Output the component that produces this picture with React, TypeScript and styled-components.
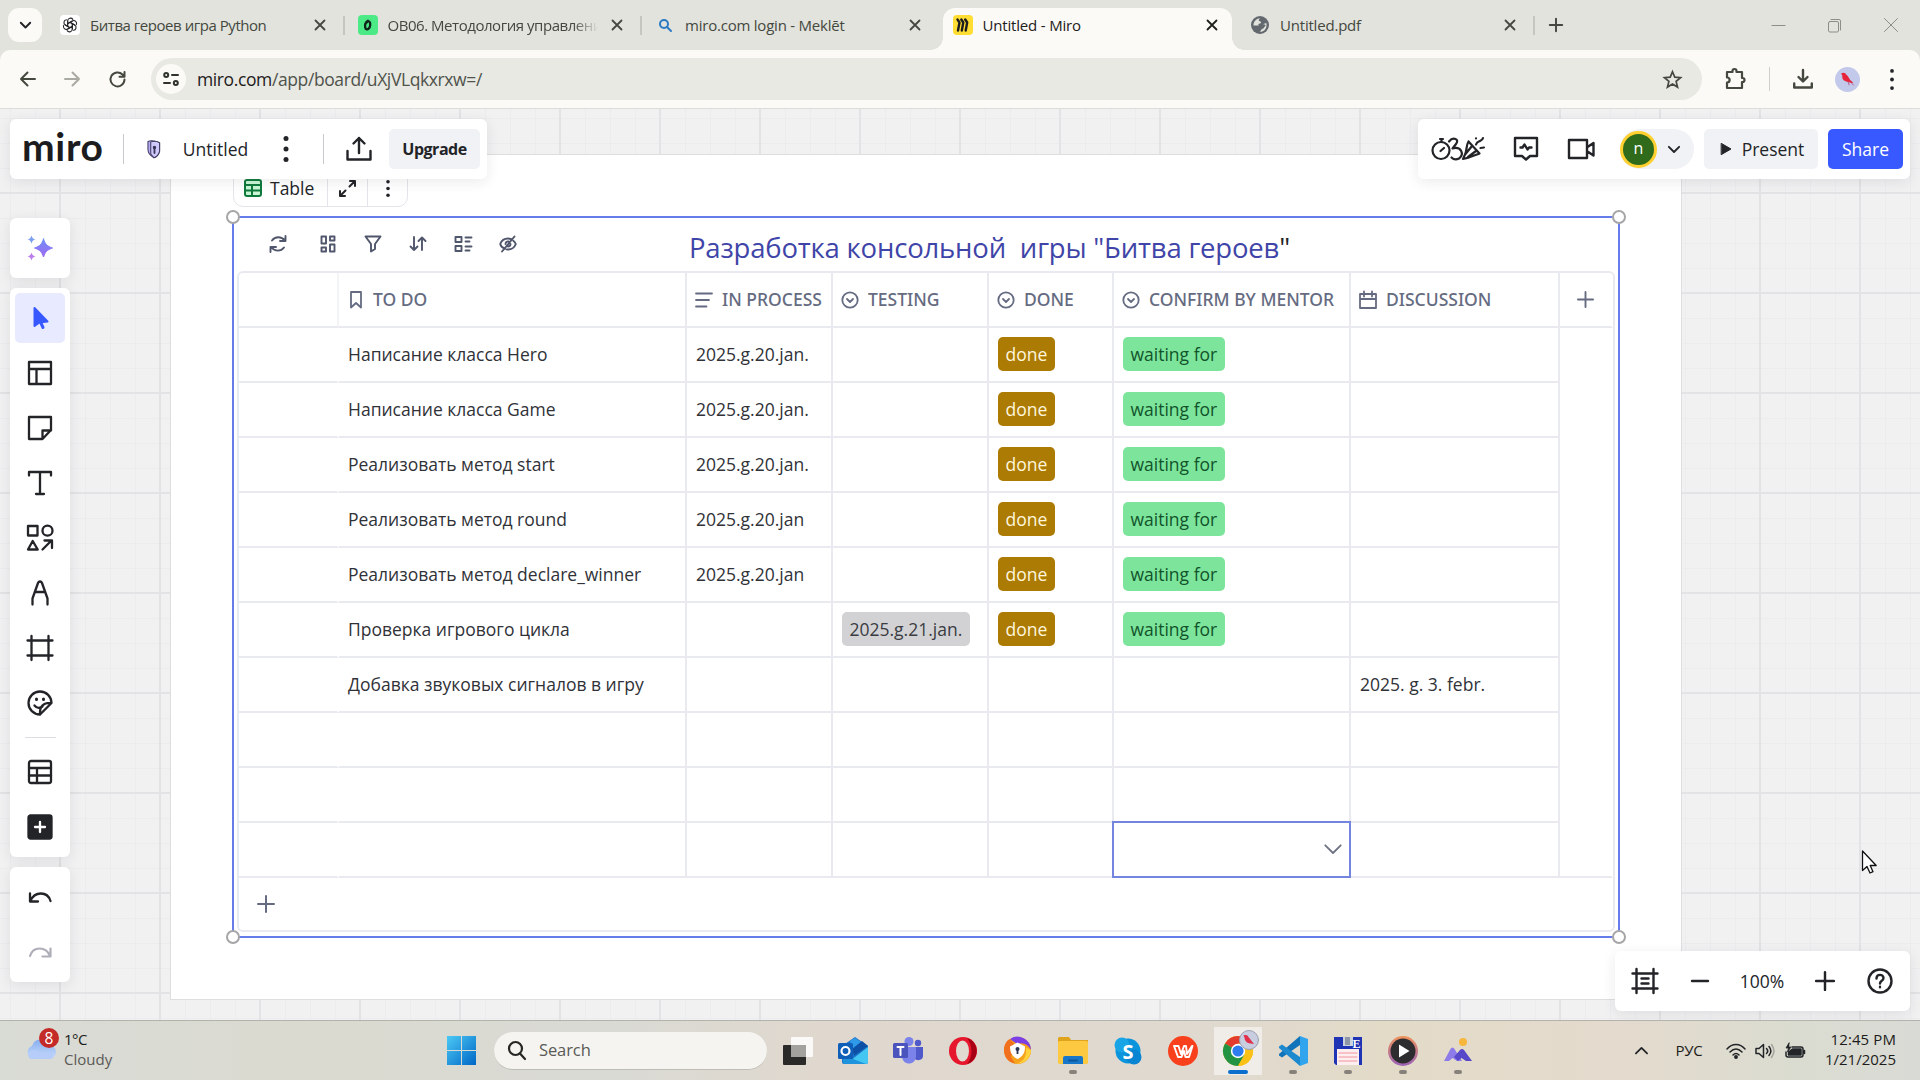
import React from "react";
import styled, { createGlobalStyle, css } from "styled-components";

const INK = "#222428";
const GREY = "#656b81";
const LINE = "#e9eaef";
const BLUE = "#3859ff";
const UI = `"Open Sans", "Noto Sans", sans-serif`;

const GlobalStyle = createGlobalStyle`
  * { box-sizing: border-box; }
  body { margin: 0; overflow: hidden; font-family: ${UI}; color: ${INK}; }
`;

const Screen = styled.div`
  width: 1920px;
  height: 1080px;
  display: flex;
  flex-direction: column;
  overflow: hidden;
`;

const Text = styled.span<{ $size: number; $ls?: number; $color?: string; $weight?: number }>`
  font-size: ${(p) => p.$size}px;
  letter-spacing: ${(p) => p.$ls ?? 0}px;
  color: ${(p) => p.$color ?? INK};
  font-weight: ${(p) => p.$weight ?? 400};
  line-height: 1.3;
  white-space: pre;
`;

const Icon = styled.svg.attrs<{ $w?: number; $stroke?: number; $color?: string }>((p) => ({
  fill: "none",
  stroke: p.$color ?? INK,
  strokeWidth: p.$stroke ?? 2,
  strokeLinecap: "round",
  strokeLinejoin: "round",
}))<{ $w?: number; $stroke?: number; $color?: string }>`
  width: ${(p) => p.$w ?? 24}px;
  height: auto;
  flex: none;
  display: block;
  overflow: visible;
`;

/* ---------- browser tab strip ---------- */

const TabStrip = styled.div`
  height: 50px;
  flex: none;
  background: #e1e3dc;
  display: flex;
  align-items: center;
  padding-left: 8px;
`;

const TabSearch = styled.div`
  width: 34px;
  height: 34px;
  border-radius: 11px;
  background: #fbfaf6;
  display: grid;
  place-items: center;
  margin-right: 4px;
`;

const Tab = styled.div<{ $active?: boolean; $line?: boolean }>`
  width: 297.5px;
  height: 50px;
  display: flex;
  align-items: center;
  padding: 0 18px 8px 14px;
  padding-top: 0;
  position: relative;
  ${(p) =>
    p.$line &&
    css`
      &::after {
        content: "";
        position: absolute;
        right: -1px;
        top: 16px;
        width: 2px;
        height: 19px;
        background: #c4c6bf;
      }
    `}
  ${(p) =>
    p.$active &&
    css`
      &::before {
        content: "";
        position: absolute;
        left: 4px;
        right: 4px;
        top: 8px;
        bottom: 0;
        border-radius: 12px 12px 0 0;
        background: #fbfaf6;
      }
    `}
`;

const Flare = styled.i<{ $side: "left" | "right" }>`
  position: absolute;
  bottom: 0;
  ${(p) => (p.$side === "left" ? "left: -8px;" : "right: -8px;")}
  width: 12px;
  height: 12px;
  background: radial-gradient(circle at ${(p) => (p.$side === "left" ? "0 0" : "100% 0")}, transparent 11.5px, #fbfaf6 12px);
`;

const TabBody = styled.div`
  position: relative;
  flex: 1;
  min-width: 0;
  display: flex;
  align-items: center;
  padding-top: 8px;
`;

const Favicon = styled.div<{ $bg?: string }>`
  width: 20px;
  height: 20px;
  flex: none;
  margin-right: 10px;
  border-radius: 4px;
  background: ${(p) => p.$bg ?? "transparent"};
  display: grid;
  place-items: center;
`;

const TabTitle = styled.div<{ $fade?: boolean }>`
  flex: none;
  width: 210px;
  padding-top: 1px;
  display: flex;
  ${(p) => p.$fade && "mask-image: linear-gradient(90deg, #000 185px, transparent 210px);"}
`;

const Close = ({ color = "#45483f" }: { color?: string }) => (
  <Icon $w={12} viewBox="0 0 12 12" $stroke={1.8} $color={color}>
    <path d="M1.5 1.5l9 9M10.5 1.5l-9 9" />
  </Icon>
);

const CloseSlot = styled.div`
  margin-left: auto;
`;

const WindowButtons = styled.div`
  margin-left: auto;
  display: flex;
  align-items: center;
  gap: 43px;
  padding-right: 22px;
`;

const NewTab = styled.div`
  margin-left: 15px;
`;

/* ---------- address bar ---------- */

const Toolbar = styled.div`
  height: 59px;
  flex: none;
  background: #e1e3dc;
`;

const ToolbarInner = styled.div`
  height: 59px;
  background: #fbfaf6;
  border-radius: 10px 10px 0 0;
  border-bottom: 1px solid #dcddd8;
  display: flex;
  align-items: center;
  padding-left: 19px;
  padding-right: 17px;
`;

const NavButtons = styled.div`
  display: flex;
  align-items: center;
  gap: 28px;
  width: 132px;
`;

const Omnibox = styled.div`
  width: 1551px;
  height: 42px;
  border-radius: 21px;
  background: #e8e9e3;
  display: flex;
  align-items: center;
  padding: 0 20px 0 5px;
`;

const SiteInfo = styled.div`
  width: 30px;
  height: 30px;
  border-radius: 50%;
  background: #fbfaf6;
  display: grid;
  place-items: center;
  margin-right: 11px;
`;

const OmniEnd = styled.div`
  margin-left: auto;
`;

const ToolbarActions = styled.div`
  flex: 1;
  display: flex;
  align-items: center;
  padding-left: 22px;
`;

const ThinRule = styled.div<{ $h: number; $ml: number; $mr: number; $c?: string }>`
  width: 1px;
  height: ${(p) => p.$h}px;
  margin: 0 ${(p) => p.$mr}px 0 ${(p) => p.$ml}px;
  background: ${(p) => p.$c ?? "#c7c9cf"};
  flex: none;
`;

const ProfilePic = styled.div`
  width: 25px;
  height: 25px;
  border-radius: 50%;
  background: #c3c9ea;
  display: grid;
  place-items: center;
  margin: 0 29px 0 22px;
`;

const Bird = ({ w }: { w: number }) => (
  <Icon $w={w} viewBox="0 0 14 14" $stroke={0}>
    <path d="M1 1.500C3 0 5 .5 6 2.500c2 1.500 2.500 3.500 3.500 5L12.500 10l-1.500.2-4.500-1.200C3 8.500 1.800 6 2.200 3.500z" fill="#e8243c" stroke="none" />
    <path d="M7.500 9l1 3M10.500 10l2 2.200" stroke="#b0507a" strokeWidth="0.800" />
  </Icon>
);

/* ---------- board canvas ---------- */

const Canvas = styled.div`
  position: relative;
  height: 911px;
  flex: none;
  overflow: hidden;
  background-color: #f1f1f2;
  background-image: linear-gradient(90deg, #e3e3e5 2px, transparent 2px), linear-gradient(#e3e3e5 2px, transparent 2px),
    linear-gradient(90deg, #ececee 1px, transparent 1px), linear-gradient(#ececee 1px, transparent 1px);
  background-size: 100px 100px, 100px 100px, 25px 25px, 25px 25px;
  background-position: 59px 0, 0 83px, 10px 0, 0 9px;
`;

const Frame = styled.div`
  position: absolute;
  left: 171px;
  top: 46px;
  width: 1510px;
  height: 844px;
  background: #fff;
  outline: 1px solid #dededf;
`;

const Widget = styled.div`
  position: absolute;
  left: 61px;
  top: 61px;
  width: 1388px;
  height: 722px;
  border: 2px solid #667ceb;
  padding: 0 4px 0 3px;
  display: flex;
  flex-direction: column;
`;

const Handle = styled.i<{ $x: "left" | "right"; $y: "top" | "bottom" }>`
  position: absolute;
  ${(p) => p.$x}: -8px;
  ${(p) => p.$y}: -8px;
  width: 14px;
  height: 14px;
  border: 2px solid #a6a6a8;
  border-radius: 50%;
  background: #fff;
`;

const Chip = styled.div`
  position: absolute;
  left: 62px;
  top: 14px;
  width: 175px;
  height: 38px;
  border: 1.500px solid #e4e5ea;
  border-radius: 10px;
  background: #fff;
  display: grid;
  grid-template-columns: 93px 40px 1fr;
`;

const ChipCell = styled.div<{ $first?: boolean }>`
  display: flex;
  align-items: center;
  justify-content: ${(p) => (p.$first ? "flex-start" : "center")};
  gap: 8px;
  padding-left: ${(p) => (p.$first ? 10 : 0)}px;
  border-left: ${(p) => (p.$first ? "none" : "1px solid #e4e5ea")};
`;

const WidgetHead = styled.div`
  height: 53px;
  flex: none;
  display: flex;
  align-items: center;
`;

const HeadTools = styled.div`
  display: flex;
  width: 452px;
  padding-left: 13px;
  padding-bottom: 1px;
  > * {
    width: 45px;
    flex: none;
    display: grid;
    place-items: center;
  }
  > :first-child {
    width: 55px;
  }
`;

const Title = styled.div`
  padding-top: 6px;
  display: flex;
`;

const COLS = "100px 348px 146px 156px 125px 237px 209px 53px";

const Table = styled.div`
  border: 2px solid ${LINE};
  border-radius: 6px;
  width: 1378px;
  height: 661px;
  display: flex;
  flex-direction: column;
`;

const TableBody = styled.div`
  display: grid;
  grid-template-columns: ${COLS};
  grid-template-rows: repeat(11, 55px);
  flex: none;
`;

const Cell = styled.div<{ $noRight?: boolean; $noBottom?: boolean; $center?: boolean; $active?: boolean; $faint?: boolean }>`
  border-right: 2px solid ${(p) => (p.$noRight ? "transparent" : p.$faint ? "#f3f4f6" : LINE)};
  border-bottom: 2px solid ${(p) => (p.$noBottom ? "transparent" : LINE)};
  padding-left: ${(p) => (p.$center ? 0 : 9)}px;
  display: flex;
  align-items: center;
  justify-content: ${(p) => (p.$center ? "center" : "flex-start")};
  min-width: 0;
  ${(p) =>
    p.$active &&
    css`
      margin: -2px 0 0 -2px;
      border: 2px solid #7385de;
      justify-content: flex-end;
      padding-right: 7px;
    `}
`;

const HeaderCell = styled(Cell)<{ $first: boolean }>`
  gap: 9px;
  padding-left: ${(p) => (p.$first ? 9 : 8)}px;
  font-family: "Noto Sans", "Open Sans", sans-serif;
`;

const TAGS = {
  done: ["#ac7b03", "#fff6dd"],
  wait: ["#7ce59b", "#12532b"],
  date: ["#d2d2d4", "#3a3c42"],
};

const Tag = styled.div<{ $kind: keyof typeof TAGS }>`
  height: 34px;
  padding: 0 7.5px;
  margin-bottom: 1px;
  border-radius: 5px;
  background: ${(p) => TAGS[p.$kind][0]};
  color: ${(p) => TAGS[p.$kind][1]};
  font-size: 17.500px;
  display: flex;
  align-items: center;
  white-space: nowrap;
`;

const AddRow = styled.div`
  flex: 1;
  display: flex;
  align-items: center;
  padding-left: 18px;
`;

/* ---------- floating board panels ---------- */

const Panel = styled.div`
  position: absolute;
  background: #fff;
  border-radius: 6px;
  box-shadow: 0 3px 14px rgba(34, 36, 40, 0.09);
  display: flex;
  align-items: center;
`;

const TopLeft = styled(Panel)`
  left: 10px;
  top: 10px;
  width: 477px;
  height: 60px;
  padding-left: 11px;
`;

const TopRight = styled(Panel)`
  left: 1418px;
  top: 10px;
  width: 492px;
  height: 60px;
  padding-left: 13px;
`;

const ZoomPanel = styled(Panel)`
  left: 1615px;
  top: 842px;
  width: 295px;
  height: 60px;
  padding-left: 16px;
`;

const SidePanel = styled(Panel)<{ $top: number; $h: number; $pt?: number }>`
  left: 10px;
  top: ${(p) => p.$top}px;
  width: 60px;
  height: ${(p) => p.$h}px;
  flex-direction: column;
  padding-top: ${(p) => p.$pt ?? 5}px;
  gap: 5px;
`;

const Tool = styled.div<{ $on?: boolean }>`
  width: 50px;
  height: 50px;
  border-radius: 5px;
  background: ${(p) => (p.$on ? "#e8ebff" : "transparent")};
  display: grid;
  place-items: center;
  flex: none;
`;

const ToolRule = styled.div`
  width: 31px;
  height: 1px;
  background: #dcdde2;
  margin: 4px 0 4px;
  flex: none;
`;

const Slot = styled.div<{ $w: number }>`
  width: ${(p) => p.$w}px;
  flex: none;
  display: flex;
  align-items: center;
  justify-content: center;
`;

const LogoText = styled.div`
  width: 86px;
  height: 60px;
  flex: none;
`;

const Button = styled.div<{ $w: number; $blue?: boolean }>`
  width: ${(p) => p.$w}px;
  height: 40px;
  border-radius: 5px;
  background: ${(p) => (p.$blue ? BLUE : "#f1f2f5")};
  display: flex;
  align-items: center;
  justify-content: center;
  gap: 10px;
  flex: none;
`;

const UserPill = styled.div`
  width: 74px;
  height: 40px;
  border-radius: 20px;
  background: #f1f2f5;
  display: flex;
  align-items: center;
  gap: 11px;
  margin: 0 10px 0 25px;
`;

const Avatar = styled.div`
  width: 37px;
  height: 37px;
  border-radius: 50%;
  border: 3px solid #ffd02f;
  background: #2f6b1a;
  color: #fff;
  font-size: 16px;
  display: grid;
  place-items: center;
  padding-bottom: 2px;
`;

const Pointer = styled.div`
  position: absolute;
  left: 1861px;
  top: 741px;
`;

/* ---------- taskbar ---------- */

const Taskbar = styled.div`
  height: 60px;
  flex: none;
  border-top: 1px solid #b3b3ad;
  background: linear-gradient(90deg, #d9dbd5 0, #dadad0 16%, #d9dad4 32%, #e0d8ce 43%, #dfd9d0 62%, #e3dbc8 72%, #e4dacd 84%, #dbdcd0 93%, #d9dad5);
  display: flex;
  align-items: center;
`;

const Weather = styled.div`
  width: 447px;
  display: flex;
  padding-left: 25px;
  gap: 7px;
`;

const WeatherLines = styled.div`
  display: flex;
  flex-direction: column;
  justify-content: center;
  padding-bottom: 2px;
`;

const SearchBox = styled.div`
  width: 273px;
  height: 38px;
  border-radius: 19px;
  background: #f5f4f0;
  border-bottom: 1px solid #bdbcb5;
  margin-left: 18px;
  margin-right: 3px;
  padding-left: 13px;
  display: flex;
  align-items: center;
  gap: 13px;
`;

const DockItem = styled.div<{ $active?: boolean; $running?: boolean }>`
  width: 55px;
  height: 59px;
  flex: none;
  display: grid;
  place-items: center;
  position: relative;
  ${(p) =>
    p.$active &&
    css`
      background: linear-gradient(#f0ede8, #f0ede8) center / 48px 48px no-repeat;
    `}
  &::after {
    content: "";
    position: absolute;
    bottom: 6px;
    height: 4px;
    border-radius: 2px;
    width: ${(p) => (p.$active ? 20 : p.$running ? 8 : 0)}px;
    background: ${(p) => (p.$active ? "#0b6fce" : "#86827b")};
  }
`;

const Tray = styled.div`
  margin-left: auto;
  display: flex;
  align-items: center;
  padding-right: 24px;
`;

const Clock = styled.div`
  width: 80px;
  display: flex;
  flex-direction: column;
  align-items: flex-end;
  padding-bottom: 2px;
`;

/* ---------- data ---------- */

type RowData = { task: string; process?: string; testing?: string; done?: boolean; talk?: string };

const rows: RowData[] = [
  { task: "Написание класса Hero", process: "2025.g.20.jan.", done: true },
  { task: "Написание класса Game", process: "2025.g.20.jan.", done: true },
  { task: "Реализовать метод start", process: "2025.g.20.jan.", done: true },
  { task: "Реализовать метод round", process: "2025.g.20.jan", done: true },
  { task: "Реализовать метод declare_winner", process: "2025.g.20.jan", done: true },
  { task: "Проверка игрового цикла", testing: "2025.g.21.jan.", done: true },
  { task: "Добавка звуковых сигналов в игру", talk: "2025. g. 3. febr." },
  { task: "" },
  { task: "" },
  { task: "" },
];

const Chevron = ({ w, color = INK, s = 2 }: { w: number; color?: string; s?: number }) => (
  <Icon $w={w} viewBox="0 0 14 8" $stroke={s} $color={color}>
    <path d="M1 1l6 6 6-6" />
  </Icon>
);

const SelectIcon = () => (
  <Icon $w={18} viewBox="0 0 18 18" $stroke={1.8} $color={GREY}>
    <circle cx="9" cy="9" r="7.700" />
    <path d="M6 8l3 3 3-3" />
  </Icon>
);

const Plus = ({ w, s = 2, color = GREY }: { w: number; s?: number; color?: string }) => (
  <Icon $w={w} viewBox="0 0 18 18" $stroke={s} $color={color}>
    <path d="M9 1v16M1 9h16" />
  </Icon>
);

const Dots = ({ h, r }: { h: number; r: number }) => (
  <Icon $w={6} viewBox={`0 0 6 ${h}`} $stroke={0}>
    <g fill={INK} stroke="none">
      <circle cx="3" cy={r} r={r} />
      <circle cx="3" cy={h / 2} r={r} />
      <circle cx="3" cy={h - r} r={r} />
    </g>
  </Icon>
);

const headers: { label: string; icon: React.ReactNode }[] = [
  {
    label: "TO DO",
    icon: (
      <Icon $w={16} viewBox="0 0 16 18" $stroke={1.8} $color={GREY}>
        <path d="M3 1h10v15.500l-5-4.500-5 4.500z" />
      </Icon>
    ),
  },
  {
    label: "IN PROCESS",
    icon: (
      <Icon $w={18} viewBox="0 0 18 18" $stroke={1.8} $color={GREY}>
        <path d="M1 2.500h16M1 9h13M1 15.500h10.500" />
      </Icon>
    ),
  },
  { label: "TESTING", icon: <SelectIcon /> },
  { label: "DONE", icon: <SelectIcon /> },
  { label: "CONFIRM BY MENTOR", icon: <SelectIcon /> },
  {
    label: "DISCUSSION",
    icon: (
      <Icon $w={18} viewBox="0 0 18 18" $stroke={1.8} $color={GREY}>
        <path d="M1 3h16v14H1zM1 8h16M5 .5v5M13 .5v5" />
      </Icon>
    ),
  },
];

const BodyText = ({ children }: { children: React.ReactNode }) => (
  <Text $size={17.5} $color="#303238">
    {children}
  </Text>
);

const TableRow = ({ row, last }: { row: RowData; last: boolean }) => (
  <>
    <Cell $noRight />
    <Cell>
      <BodyText>{row.task}</BodyText>
    </Cell>
    <Cell>{row.process && <BodyText>{row.process}</BodyText>}</Cell>
    <Cell>{row.testing && <Tag $kind="date">{row.testing}</Tag>}</Cell>
    <Cell>{row.done && <Tag $kind="done">done</Tag>}</Cell>
    <Cell $active={last}>
      {row.done && <Tag $kind="wait">waiting for</Tag>}
      {last && <Chevron w={18} color="#6f7282" s={1.4} />}
    </Cell>
    <Cell>{row.talk && <BodyText>{row.talk}</BodyText>}</Cell>
    <Cell $noRight $noBottom={!last} />
  </>
);

const HeadIcon = ({ children }: { children: React.ReactNode }) => (
  <div>
    <Icon $w={18} viewBox="0 0 18 18" $stroke={1.9} $color="#50566b">
      {children}
    </Icon>
  </div>
);

const TableWidget = () => (
  <Widget>
    <WidgetHead>
      <HeadTools>
        <HeadIcon>
          <path d="M3 5.500C6 1.500 12 1 16 5.500M16.500 1v5H11M15 12.500c-3 4-9 4.500-13-.5M1.500 17v-5H7" />
        </HeadIcon>
        <HeadIcon>
          <path d="M2.500 1.500h4.500v7H2.500zM11 1.500h4.500v4H11zM2.500 12.500h4.500v4H2.500zM11 9.500h4.500v7H11z" />
        </HeadIcon>
        <HeadIcon>
          <path d="M1.500 1.500h15L11 9v5l-4 2.500V9z" />
        </HeadIcon>
        <HeadIcon>
          <path d="M5 2v13M1.500 11.500L5 15l3.500-3.500M13 15V3M9.500 6L13 2.500 16.500 6" />
        </HeadIcon>
        <HeadIcon>
          <path d="M1.500 2h6v5h-6zM1.500 11h6v5h-6zM11.500 2.500h6M11.500 6.500h4M11.500 11.500h6M11.500 15.500h4" />
        </HeadIcon>
        <HeadIcon>
          <path d="M6 13.700C3.500 13 1.800 11 1.200 9 2.500 5.500 5.500 3.500 9 3.500c1 0 2 .2 2.800.5M14.300 5.700c1.200.9 2 2 2.500 3.300-1.300 3.500-4.300 5.500-7.800 5.500-.5 0-1 0-1.300-.1M3 16.500L15.500 1.500M6.500 9a2.500 2.500 0 013-2.500M11.500 9A2.500 2.500 0 019 11.500" />
        </HeadIcon>
      </HeadTools>
      <Title>
        <Text $size={27.5} $ls={-0.19} $color="#3f45a8">
          {'Разработка консольной  игры "Битва героев'}
        </Text>
        <Text $size={27.5}>"</Text>
      </Title>
    </WidgetHead>
    <Table>
      <TableBody>
        <Cell $faint />
        {headers.map((h, i) => (
          <HeaderCell key={h.label} $first={i === 0}>
            {h.icon}
            <Text $size={17.5} $weight={500} $color={GREY}>
              {h.label}
            </Text>
          </HeaderCell>
        ))}
        <Cell $noRight $center>
          <Plus w={17} />
        </Cell>
        {rows.map((r, i) => (
          <TableRow key={i} row={r} last={i === rows.length - 1} />
        ))}
      </TableBody>
      <AddRow>
        <Plus w={18} />
      </AddRow>
    </Table>
    <Handle $x="left" $y="top" />
    <Handle $x="right" $y="top" />
    <Handle $x="left" $y="bottom" />
    <Handle $x="right" $y="bottom" />
  </Widget>
);

const BrowserTabs = () => (
  <TabStrip>
    <TabSearch>
      <Chevron w={11} s={2.400} />
    </TabSearch>
    <Tab $line>
      <TabBody>
        <Favicon $bg="#fff">
          <Icon $w={16} viewBox="0 0 24 24" $stroke={1.600}>
            {[0, 60, 120, 180, 240, 300].map((a) => (
              <path key={a} transform={`rotate(${a} 12 12)`} d="M8.500 14V6a4.300 4.300 0 017.800-2.500M8.500 10l7-4" />
            ))}
          </Icon>
        </Favicon>
        <TabTitle>
          <Text $size={15} $ls={-0.46} $color="#45483f">Битва героев игра Python</Text>
        </TabTitle>
        <CloseSlot><Close /></CloseSlot>
      </TabBody>
    </Tab>
    <Tab $line>
      <TabBody>
        <Favicon $bg="#4bea86">
          <Icon $w={9} viewBox="0 0 10 14" $stroke={2.600} $color="#10241a">
            <path d="M5.500 2C3 3.500 2 7 2.500 9.500S5 12 6.500 10.500 8.500 5 7.500 3.500 5 2.500 4 4" />
          </Icon>
        </Favicon>
        <TabTitle $fade>
          <Text $size={15} $ls={-0.46} $color="#45483f">ОВ06. Методология управлени</Text>
        </TabTitle>
        <CloseSlot><Close /></CloseSlot>
      </TabBody>
    </Tab>
    <Tab>
      <TabBody>
        <Favicon>
          <Icon $w={13} viewBox="0 0 13 13" $stroke={2} $color="#2a79c4">
            <circle cx="5" cy="5" r="4" />
            <path d="M8 8l4 4" />
          </Icon>
        </Favicon>
        <TabTitle>
          <Text $size={15} $ls={-0.22} $color="#45483f">miro.com login - Meklēt</Text>
        </TabTitle>
        <CloseSlot><Close /></CloseSlot>
      </TabBody>
    </Tab>
    <Tab $active>
      <Flare $side="left" />
      <Flare $side="right" />
      <TabBody>
        <Favicon $bg="#ffdd33">
          <Icon $w={13} viewBox="0 0 13 14" $stroke={2.400} $color="#1c1c1e">
            <path d="M1.500 1.500l2 3-1.500 8M5.300 1.500l2 3-1.500 8M9.200 1.500l2 3-1.500 8" />
          </Icon>
        </Favicon>
        <TabTitle>
          <Text $size={15} $ls={-0.18} $color="#1e201b">Untitled - Miro</Text>
        </TabTitle>
        <CloseSlot><Close color="#1e201b" /></CloseSlot>
      </TabBody>
    </Tab>
    <Tab $line>
      <TabBody>
        <Favicon>
          <Icon $w={18} viewBox="0 0 18 18" $stroke={0}>
            <circle cx="9" cy="9" r="9" fill="#63676e" stroke="none" />
            <path d="M9.500 2.200C7 3.500 7.500 5 9.500 5.500c1 .3.500 1.800-.5 2-2 .3-2 1.500-1 2h-5.500c-.2-4 3-7.300 7-7.300zM11 8.500c1.500-.5 3 0 3.500.8.500 1-1 1-1.500 2.200s-1 1-2 1.500-1 2.500-2.500 2.800c5 .5 8-4.300 6.800-8.800z" fill="#e1e3dc" stroke="none" />
          </Icon>
        </Favicon>
        <TabTitle>
          <Text $size={15} $ls={-0.2} $color="#45483f">Untitled.pdf</Text>
        </TabTitle>
        <CloseSlot><Close /></CloseSlot>
      </TabBody>
    </Tab>
    <NewTab>
      <Plus w={14} s={2.500} color="#45483f" />
    </NewTab>
    <WindowButtons>
      <Icon $w={13} viewBox="0 0 13 13" $stroke={1} $color="#8c8e88"><path d="M0 6.500h13" /></Icon>
      <Icon $w={13} viewBox="0 0 13 13" $stroke={1} $color="#8c8e88">
        <path d="M2 2.500h7a1.500 1.500 0 011.500 1.500v8A1.500 1.500 0 019 13H2A1.500 1.500 0 01.5 12V4A1.500 1.500 0 012 2.500zM3 .5h8A1.500 1.500 0 0112.500 2v9" />
      </Icon>
      <Icon $w={14} viewBox="0 0 14 14" $stroke={1} $color="#8c8e88"><path d="M.5.5l13 13M13.500.5l-13 13" /></Icon>
    </WindowButtons>
  </TabStrip>
);

const AddressBar = () => (
  <Toolbar>
    <ToolbarInner>
      <NavButtons>
        <Icon $w={17} viewBox="0 0 17 16" $color="#45483f"><path d="M16 8H2M8.500 1.500L2 8l6.500 6.500" /></Icon>
        <Icon $w={17} viewBox="0 0 17 16" $color="#a9aba3"><path d="M1 8h14M8.500 1.500L15 8l-6.500 6.500" /></Icon>
        <Icon $w={17} viewBox="0 0 17 17" $color="#45483f"><path d="M15.500 8.500a7 7 0 11-2-5l1.800 1.800M15.500 1v4.800h-5" /></Icon>
      </NavButtons>
      <Omnibox>
        <SiteInfo>
          <Icon $w={16} viewBox="0 0 16 16" $stroke={2} $color="#30332c">
            <circle cx="3.200" cy="4" r="2" /><path d="M9 4h6M1 12h6" /><circle cx="12.800" cy="12" r="2" />
          </Icon>
        </SiteInfo>
        <Text $size={17.500} $ls={-0.39} $color="#1e201b">miro.com</Text>
        <Text $size={17.500} $ls={-0.39} $color="#50534b">/app/board/uXjVLqkxrxw=/</Text>
        <OmniEnd>
          <Icon $w={19} viewBox="0 0 20 20" $stroke={1.800} $color="#45483f">
            <path strokeLinejoin="miter" d="M10 1.800l2.400 5.700 6.100.5-4.700 4 1.500 6L10 14.800 4.700 18l1.500-6-4.700-4 6.100-.5z" />
          </Icon>
        </OmniEnd>
      </Omnibox>
      <ToolbarActions>
        <Icon $w={22} viewBox="0 0 22 22" $color="#45483f" $stroke={2.200}>
          <path d="M3 4h5.500V3a2 2 0 014 0v1H18v6h.5a2 2 0 010 4H18v6H3v-5.500c3.500 0 3.500-5 0-5z" />
        </Icon>
        <ThinRule $h={24} $ml={23} $mr={23} $c="#cfd0ca" />
        <Icon $w={20} viewBox="0 0 20 20" $color="#45483f" $stroke={2.400}>
          <path d="M10 1v11M5.500 8l4.500 4.500L14.500 8M1.200 14.500V18.500h17.600V14.500" />
        </Icon>
        <ProfilePic><Bird w={15} /></ProfilePic>
        <Dots h={21} r={1.900} />
      </ToolbarActions>
    </ToolbarInner>
  </Toolbar>
);

const BoardHeader = () => (
  <>
    <TopLeft>
      <LogoText>
        <svg width="86" height="60">
          <text x="1" y="42" textLength="81" lengthAdjust="spacing" fontFamily="Lato" fontWeight="700" fontSize="39" fill="#1c1c1e">miro</text>
        </svg>
      </LogoText>
      <ThinRule $h={30} $ml={16} $mr={23} />
      <Icon $w={14} viewBox="0 0 15 20" $stroke={1.100} $color="#3e3a60">
        <path d="M1 1.500C5 0 9 1 13.500 3v9c-1 4-3 6-6 7C3.500 17 1 14 1 10z" fill="#b5abf5" />
        <path d="M4 2v13l3.500 4c3-1 5-3 6-7V3C11 1.500 7 1 4 2z" fill="#cfc8fb" />
        <circle cx="8" cy="8" r="1.300" fill="#222" /><path d="M8 9v5" strokeWidth="2" />
      </Icon>
      <Slot $w={109}>
        <Text $size={17.500}>Untitled</Text>
      </Slot>
      <Slot $w={31}><Dots h={26} r={2.500} /></Slot>
      <ThinRule $h={30} $ml={22} $mr={22} />
      <Icon $w={26} viewBox="0 0 26 26" $stroke={2.400}>
        <path d="M13 17V2M7.500 7.500L13 2l5.500 5.500M1.500 15v8.500h23V15" />
      </Icon>
      <Slot $w={17} />
      <Button $w={91}>
        <Text $size={16} $ls={-0.5} $weight={700}>Upgrade</Text>
      </Button>
    </TopLeft>

    <TopRight>
      <Icon $w={54} viewBox="0 0 54 24" $stroke={2.200}>
        <circle cx="10" cy="13.500" r="8.500" />
        <path d="M9 2h3M10.500 2v2.500M9.500 14l3.500-3M18 4.500c4-5 11-2.500 7 2.500l-3.500 4.500c9-2.500 12 6 6.500 10-3 1.500-6 .5-7.500-1" />
        <path d="M37.500 4.500L48.500 16.500M37.500 4.500c-2.500 4-1.500 9-3.500 13l-2 4.500c4-.5 10-3 16.500-5.500M41 9l-6.500 8M45 14l-8 6M45 1.500v-.2M45 7.500c1-3 3-3 4-3.500s2.500-1 3-3M49.500 11l3.500-.5" />
      </Icon>
      <Slot $w={28} />
      <Icon $w={26} viewBox="0 0 26 26" $stroke={2.400}>
        <path d="M2 2h22v18h-7l-4 3.500L9 20H2z" /><path d="M7.500 11.500h2l2-3 3 5 1.500-2h2.500" />
      </Icon>
      <Slot $w={28} />
      <Icon $w={28} viewBox="0 0 28 22" $stroke={2.400}>
        <path d="M2 2h18v18H2zM20.500 9l6-4v12.500l-6-4" />
      </Icon>
      <UserPill>
        <Avatar>n</Avatar>
        <Chevron w={12} s={2.200} />
      </UserPill>
      <Button $w={114}>
        <Slot $w={2} />
        <Icon $w={12} viewBox="0 0 12 14" $stroke={1}><path d="M1.500 1.500L11 7l-9.500 5.500z" fill={INK} /></Icon>
        <Text $size={17.500}>Present</Text>
        <Slot $w={0} />
      </Button>
      <Slot $w={10} />
      <Button $w={75} $blue>
        <Text $size={17.500} $color="#fff">Share</Text>
      </Button>
    </TopRight>
  </>
);

const ToolIcon = ({ children, s = 2.300 }: { children: React.ReactNode; s?: number }) => (
  <Tool>
    <Icon $w={28} viewBox="0 0 28 28" $stroke={s}>{children}</Icon>
  </Tool>
);

const SideTools = () => (
  <>
    <SidePanel $top={109} $h={60}>
      <Tool>
        <Icon $w={28} viewBox="0 0 28 28" $stroke={0}>
          <defs>
            <linearGradient id="spark" x1="0" y1="0" x2="0" y2="1">
              <stop offset="0" stopColor="#6f8cf7" /><stop offset="1" stopColor="#a06bf2" />
            </linearGradient>
          </defs>
          <path d="M17.500 5c2 5.500 3.500 7 9 9-5.500 2-7 3.500-9 9-2-5.500-3.500-7-9-9 5.500-2 7-3.500 9-9z" fill="url(#spark)" stroke="url(#spark)" strokeWidth="1" />
          <path d="M5.500 1.500c.8 2.500 1.400 3.200 4 4-2.600.8-3.200 1.500-4 4-.8-2.500-1.400-3.200-4-4 2.600-.8 3.200-1.500 4-4z" fill="#7ba0ee" stroke="none" />
          <path d="M5.500 18.500c.8 2.500 1.400 3.200 4 4-2.600.8-3.200 1.500-4 4-.8-2.500-1.400-3.200-4-4 2.600-.8 3.200-1.500 4-4z" fill="#bb7eeb" stroke="none" />
        </Icon>
      </Tool>
    </SidePanel>
    <SidePanel $top={179} $h={569}>
      <Tool $on>
        <Icon $w={16} viewBox="0 0 16 24" $stroke={2} $color={BLUE}>
          <path d="M2.500 2v18l5-3.500 8-1z" fill={BLUE} /><path d="M8 15l3 6.500" strokeWidth="3" />
        </Icon>
      </Tool>
      <ToolIcon><path d="M3 3h22v22H3zM3 10h22M10.500 10v15" /></ToolIcon>
      <ToolIcon><path d="M3 3h22v13l-8.500 9H3zM16.500 25v-8.500H25" /></ToolIcon>
      <ToolIcon><path d="M3 6.500V3h22v3.500M14 3v22M10 25h8" /></ToolIcon>
      <ToolIcon>
        <path d="M2 2h9.500v9.500H2zM6.700 17l5 8.500H2zM16.500 25.500l9-9M18.500 16.500h7.500V24" /><circle cx="21.500" cy="6.700" r="5" />
      </ToolIcon>
      <ToolIcon><path d="M6.500 25.500v-6L12 4c.8-2 3.200-2 4 0l5.500 15.500v6M9.500 13h9" /></ToolIcon>
      <ToolIcon><path d="M5.500 2v24M22.500 2v24M1.500 6.500h25M1.500 21.500h25" /></ToolIcon>
      <ToolIcon>
        <path d="M14 25.500A11.500 11.500 0 1125.500 14L14 25.500zM14 25.500c-.5-8 3-12 11.500-11.500M8.500 16.500c2 2.500 5 3 8 1" />
        <path d="M10.500 10v.5M17.500 10v.5" strokeWidth="3" />
      </ToolIcon>
      <ToolRule />
      <ToolIcon><rect x="3" y="3" width="22" height="22" rx="2" /><path d="M3 10h22M3 17.500h22M11 10v15" /></ToolIcon>
      <ToolIcon>
        <rect x="2.500" y="2.500" width="23" height="23" rx="2" fill={INK} />
        <path d="M14 9v10M9 14h10" stroke="#fff" />
      </ToolIcon>
    </SidePanel>
    <SidePanel $top={758} $h={115} $pt={6}>
      <ToolIcon><path d="M4 9.500v8h8M4.500 17c4-10 17-10 20 0" /></ToolIcon>
      <Tool>
        <Icon $w={28} viewBox="0 0 28 28" $stroke={2.200} $color="#aeafb9">
          <path d="M24.500 9.500v8h-8M24 17c-4-10-17-10-20 0" />
        </Icon>
      </Tool>
    </SidePanel>
  </>
);

const ZoomControls = () => (
  <ZoomPanel>
    <Icon $w={28} viewBox="0 0 28 28" $stroke={2.400}>
      <path d="M5.500 2v24M22.500 2v24M1.500 6.500h25M1.500 21.500h25M10.500 11.500h7M10.500 16.500h7" />
    </Icon>
    <Slot $w={32} />
    <Icon $w={18} viewBox="0 0 18 18" $stroke={2.400}><path d="M1 9h16" /></Icon>
    <Slot $w={106}><Text $size={17.500}>100%</Text></Slot>
    <Plus w={20} s={2.200} color={INK} />
    <Slot $w={32} />
    <Icon $w={26} viewBox="0 0 26 26" $stroke={2.400}>
      <circle cx="13" cy="13" r="11.500" /><path d="M9.500 10.500c0-5 7-4.500 7-.5 0 3-3.500 2.500-3.500 5.500M13 18.800v.4" />
    </Icon>
  </ZoomPanel>
);

const TaskbarApps = () => (
  <>
    <DockItem>
      <Icon $w={30} viewBox="0 0 30 28" $stroke={0}>
        <rect x="0" y="8" width="23" height="20" rx="1" fill="#2a2a28" />
        <rect x="8" y="0" width="22" height="20" rx="1" fill="#fff" opacity="0.85" />
        <rect x="8" y="8" width="15" height="12" fill="#a3a29f" />
      </Icon>
    </DockItem>
    <DockItem>
      <Icon $w={30} viewBox="0 0 30 27" $stroke={0}>
        <path d="M4 9L17 0l13 9v16a2 2 0 01-2 2H6a2 2 0 01-2-2z" fill="#1b74c9" />
        <path d="M12 4l5-3 12 8-13 10z" fill="#2f9be8" /><path d="M14 12l10-8 6 5-14 10z" fill="#0d51a6" />
        <path d="M30 10v15a2 2 0 01-2 2H8z" fill="#43c7f2" /><path d="M5 18l23 9H7c-2 0-2-1-2-2z" fill="#1f93dc" />
        <rect x="0" y="6" width="15" height="16" rx="1.500" fill="#0f5eb8" />
        <circle cx="7.500" cy="14" r="4" fill="none" stroke="#fff" strokeWidth="2.200" />
      </Icon>
    </DockItem>
    <DockItem>
      <Icon $w={30} viewBox="0 0 30 27" $stroke={0}>
        <circle cx="16" cy="4.500" r="4.500" fill="#7b83eb" /><circle cx="25" cy="6" r="3.200" fill="#5059c9" />
        <path d="M20 10h10v9c0 4-6 6-9 2z" fill="#5059c9" /><path d="M9 10h14v9c0 10-14 10-14 0z" fill="#7b83eb" />
        <rect x="0" y="6" width="15" height="15" rx="1.500" fill="#4b53bc" />
        <path d="M4.500 10h6M7.500 10v8" stroke="#fff" strokeWidth="2" />
      </Icon>
    </DockItem>
    <DockItem>
      <Icon $w={28} viewBox="0 0 28 28" $stroke={0}>
        <circle cx="14" cy="14" r="14" fill="#e6162d" /><path d="M18 1c13 4 13 22 0 26 6-8 6-18 0-26z" fill="#a70014" />
        <ellipse cx="13.500" cy="14" rx="6.500" ry="10.500" fill="#e0dad0" />
      </Icon>
    </DockItem>
    <DockItem>
      <Icon $w={27} viewBox="0 0 27 27" $stroke={0}>
        <circle cx="13.500" cy="13.500" r="13.500" fill="#f5a21d" /><path d="M6 2a13.500 13.500 0 0121 11c-3-6-8-8-14-6z" fill="#7b3fe4" />
        <path d="M0 13C0 8 2 4 6 2l5 6-4 12 4 6.500C4 25 0 20 0 13z" fill="#f0701e" />
        <path d="M27 13c0 8-7 14-14 13.500 7-2 10-8 9-16z" fill="#ffd23c" />
        <path d="M13.500 5.500l7.500 4c0 6-2 10-7.500 12.500C8 19.500 6 15.500 6 9.500z" fill="#fff" />
        <circle cx="13.500" cy="12" r="2" fill="#2b3450" /><path d="M12.600 12h1.800v5h-1.800z" fill="#2b3450" />
      </Icon>
    </DockItem>
    <DockItem $running>
      <Icon $w={30} viewBox="0 0 30 27" $stroke={0}>
        <path d="M1 0h10l2 3H30v6H0V1z" fill="#e0a31c" /><rect x="0" y="4" width="30" height="23" rx="1.500" fill="#fcc941" />
        <path d="M5 27v-6a2 2 0 012-2h16a2 2 0 012 2v6z" fill="#1977c9" /><rect x="10" y="22.500" width="10" height="2" rx="1" fill="#0e569b" />
      </Icon>
    </DockItem>
    <DockItem>
      <Icon $w={28} viewBox="0 0 28 28" $stroke={0}>
        <circle cx="14" cy="14" r="12.500" fill="#0a94dc" /><circle cx="8" cy="8" r="7.500" fill="#19a5e5" /><circle cx="20" cy="20" r="7.500" fill="#0785d2" />
        <text x="14" y="21.500" fontFamily="Open Sans" fontWeight="700" fontSize="20" textAnchor="middle" fill="#fff" stroke="none">S</text>
      </Icon>
    </DockItem>
    <DockItem>
      <Icon $w={30} viewBox="0 0 30 30" $stroke={0}>
        <circle cx="15" cy="15" r="15" fill="#f9401c" />
        <path d="M6 10h4.500l2.500 8 3-8h2l1 8 5-8M6 10l4 11h3.500l2.500-6 1.500 6H21l3.500-11" fill="none" stroke="#fff" strokeWidth="1.900" />
      </Icon>
    </DockItem>
    <DockItem $active>
      <Icon $w={30} viewBox="0 0 30 30" $stroke={0}>
        <circle cx="15" cy="15" r="15" fill="#fbc116" />
        <path d="M15 15L2 7.500A15 15 0 0128 7.500z" fill="#e33b2e" /><path d="M2 7.500A15 15 0 0015 30l6.500-11.200L15 15z" fill="#229342" />
        <path d="M28 7.500H15V15l6.500 3.800L15 30A15 15 0 0028 7.500z" fill="#fbc116" />
        <circle cx="15" cy="15" r="7.200" fill="#fff" /><circle cx="15" cy="15" r="5.600" fill="#2f7cf0" />
        <circle cx="26" cy="4" r="9.500" fill="#c9cde0" stroke="#9ba0b0" strokeWidth="1" />
        <path d="M20.500-.5c2-1 4-.5 5 1.500L31 8l-5-.8c-3-.7-4.500-3-4.500-5.700z" fill="#e0304a" />
      </Icon>
    </DockItem>
    <DockItem $running>
      <Icon $w={30} viewBox="0 0 30 30" $stroke={0}>
        <path d="M22 9L4 21.500 1 19.500v-1.500L22 0z" fill="#1173ba" /><path d="M22 21L4 8.500 1 10.500V12l21 18z" fill="#1d8ad0" />
        <path d="M22 0l8 3v24l-8 3z" fill="#31a4ee" />
      </Icon>
    </DockItem>
    <DockItem $running>
      <Icon $w={28} viewBox="0 0 28 28" $stroke={0}>
        <path d="M0 0h28v28H2l-2-2z" fill="#1e34b4" /><rect x="9" y="0" width="10" height="9" fill="#cdd3dc" /><path d="M11 0h5v8h-5z" fill="#8d97a8" />
        <rect x="3" y="12" width="22" height="16" fill="#fdeff0" /><path d="M5 16h18M5 20h18M5 24h18" stroke="#f0939b" strokeWidth="1" />
        <text x="22.500" y="10.500" fontFamily="Liberation Serif" fontWeight="700" fontSize="12" textAnchor="middle" fill="#fff" stroke="none">E</text>
      </Icon>
    </DockItem>
    <DockItem $running>
      <Icon $w={30} viewBox="0 0 30 30" $stroke={0}>
        <defs>
          <linearGradient id="ring" x1="0" y1="0" x2="0" y2="1"><stop offset="0" stopColor="#f0935a" /><stop offset="1" stopColor="#9a62b8" /></linearGradient>
        </defs>
        <circle cx="15" cy="15" r="15" fill="url(#ring)" /><circle cx="15" cy="15" r="12.500" fill="#2d2c2e" /><path d="M11 8.500l10.500 6.500L11 21.500z" fill="#fff" />
      </Icon>
    </DockItem>
    <DockItem $running>
      <Icon $w={28} viewBox="0 0 28 24" $stroke={0}>
        <circle cx="19" cy="3" r="4" fill="#f6b73c" />
        <path d="M0 22l6.500-12q2-3 4 0L18 22h-5l-4.500-3L5 22z" fill="#8d7bea" /><path d="M10 18l6-7q2-2 4 0l8 11h-6l-4.500-3-3.500 3z" fill="#5648c8" />
      </Icon>
    </DockItem>
  </>
);

export default function App() {
  return (
    <Screen>
      <GlobalStyle />
      <BrowserTabs />
      <AddressBar />
      <Canvas>
        <Frame>
          <Chip>
            <ChipCell $first>
              <Icon $w={18} viewBox="0 0 18 18" $stroke={2} $color="#107a3d">
                <rect x="1" y="1" width="16" height="16" rx="2" fill="#c9f7d6" /><path d="M1 6h16M1 11.500h16M8 6v11" />
              </Icon>
              <Text $size={17.500}>Table</Text>
            </ChipCell>
            <ChipCell>
              <Icon $w={17} viewBox="0 0 17 17"><path d="M10.500 6.500L16 1M11 1h5v5M6.500 10.500L1 16M1 11v5h5" /></Icon>
            </ChipCell>
            <ChipCell><Dots h={17} r={1.800} /></ChipCell>
          </Chip>
          <TableWidget />
        </Frame>
        <BoardHeader />
        <SideTools />
        <ZoomControls />
        <Pointer>
          <Icon $w={16} viewBox="0 0 16 24" $stroke={1.300} $color="#111">
            <path d="M1.500 1v19.500l4.500-4 3 6.500 3-1.300-2.800-6.200h6z" fill="#fff" />
          </Icon>
        </Pointer>
      </Canvas>
      <Taskbar>
        <Weather>
          <Icon $w={32} viewBox="0 0 32 44" $stroke={0}>
            <defs>
              <linearGradient id="cloud" x1="0" y1="0" x2="0" y2="1"><stop offset="0" stopColor="#86aef0" /><stop offset="1" stopColor="#c9dcfa" /></linearGradient>
            </defs>
            <path d="M7 30a7 7 0 010-13 9 9 0 0117-1 7 7 0 010 14z" fill="url(#cloud)" />
            <path d="M5 30a5.500 5.500 0 015-9c3 0 4 3 5 3s12-2 13 2-3 4-4 4z" fill="#b5cdf8" />
            <circle cx="24" cy="9" r="10" fill="#c42b28" />
            <text x="24" y="14.500" fontFamily="Open Sans" fontSize="15.500" textAnchor="middle" fill="#fff" stroke="none">8</text>
          </Icon>
          <WeatherLines>
            <Text $size={15} $ls={-0.5} $color="#1d1d1b">1°C</Text>
            <Text $size={15} $color="#5a5a57">Cloudy</Text>
          </WeatherLines>
        </Weather>
        <Icon $w={29} viewBox="0 0 29 29" $stroke={0}>
          <defs>
            <linearGradient id="win" x1="0" y1="0" x2="1" y2="1"><stop offset="0" stopColor="#4cc9f5" /><stop offset="1" stopColor="#0067c6" /></linearGradient>
          </defs>
          <path d="M0 0h14v14H0zM15 0h14v14H15zM0 15h14v14H0zM15 15h14v14H15z" fill="url(#win)" />
        </Icon>
        <SearchBox>
          <Icon $w={19} viewBox="0 0 19 19" $stroke={2.200} $color="#262624"><circle cx="8.500" cy="7.500" r="6.500" /><path d="M13 12.500l5 5.500" /></Icon>
          <Text $size={16.500} $ls={-0.1} $color="#5a5a57">Search</Text>
        </SearchBox>
        <TaskbarApps />
        <Tray>
          <Icon $w={13} viewBox="0 0 14 8" $stroke={1.900}><path d="M1 7l6-6 6 6" /></Icon>
          <Slot $w={4} />
          <Slot $w={74}><Text $size={15} $ls={-0.3} $color="#1d1d1b">РУС</Text></Slot>
          <Icon $w={20} viewBox="0 0 20 16" $stroke={1.500}>
            <path d="M1 6c5-6 13-6 18 0M4 9c4-4 8-4 12 0M7 12c2-2 4-2 6 0" /><circle cx="10" cy="14" r="1.200" fill={INK} />
          </Icon>
          <Slot $w={9} />
          <Icon $w={19} viewBox="0 0 19 16" $stroke={1.500}>
            <path d="M1 5.500h3L8.500 1.500v13L4 10.500H1zM11.500 5.500c1.500 1.500 1.500 3.500 0 5M14 3.500c2.500 3 2.500 6 0 9" /><path d="M16.500 1.500c3 4 3 9 0 13" opacity="0.300" />
          </Icon>
          <Slot $w={11} />
          <Icon $w={21} viewBox="0 0 21 16" $stroke={1.500}>
            <path d="M7 4h9a2 2 0 012 2v6a2 2 0 01-2 2H3a2 2 0 01-2-2V9M19.500 7.500v3" /><path d="M7.500 6H16v6H3.500V9z" fill={INK} />
            <path d="M4 0L1 5h2.500L2.500 9l3.500-5H4z" fill={INK} strokeWidth="0.800" />
          </Icon>
          <Slot $w={10} />
          <Clock>
            <Text $size={15} $ls={0.1} $color="#1d1d1b">12:45 PM</Text>
            <Text $size={15} $color="#1d1d1b">1/21/2025</Text>
          </Clock>
        </Tray>
      </Taskbar>
    </Screen>
  );
}
